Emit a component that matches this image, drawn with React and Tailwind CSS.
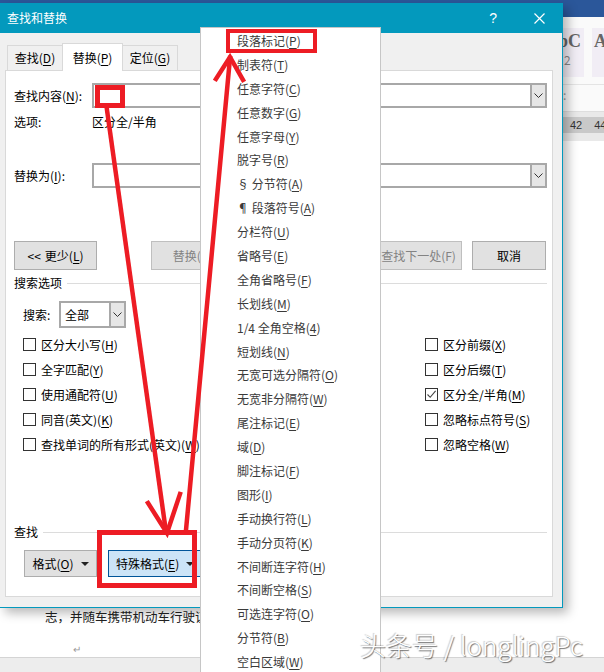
import React from "react";

function L({ t }) {
  const i = t.indexOf("&");
  if (i < 0) return t;
  return (
    <>
      {t.slice(0, i)}
      <u className="underline-offset-2">{t[i + 1]}</u>
      {t.slice(i + 2)}
    </>
  );
}

const MENU = [
  "段落标记(&P)",
  "制表符(&T)",
  "任意字符(&C)",
  "任意数字(&G)",
  "任意字母(&Y)",
  "脱字号(&R)",
  "§ 分节符(&A)",
  "¶ 段落符号(&A)",
  "分栏符(&U)",
  "省略号(&E)",
  "全角省略号(&F)",
  "长划线(&M)",
  "1/4 全角空格(&4)",
  "短划线(&N)",
  "无宽可选分隔符(&O)",
  "无宽非分隔符(&W)",
  "尾注标记(&E)",
  "域(&D)",
  "脚注标记(&F)",
  "图形(&I)",
  "手动换行符(&L)",
  "手动分页符(&K)",
  "不间断连字符(&H)",
  "不间断空格(&S)",
  "可选连字符(&O)",
  "分节符(&B)",
  "空白区域(&W)",
];

const LEFT_OPTS = [
  ["区分大小写(&H)", false],
  ["全字匹配(&Y)", false],
  ["使用通配符(&U)", false],
  ["同音(英文)(&K)", false],
  ["查找单词的所有形式(英文)(&W)", false],
];

const RIGHT_OPTS = [
  ["区分前缀(&X)", false],
  ["区分后缀(&T)", false],
  ["区分全/半角(&M)", true],
  ["忽略标点符号(&S)", false],
  ["忽略空格(&W)", false],
];

function Chevron() {
  return (
    <svg width="9" height="5" viewBox="0 0 9 5">
      <path d="M0.5 0.5 L4.5 4.5 L8.5 0.5" stroke="#333" fill="none" />
    </svg>
  );
}

function Caret() {
  return (
    <svg width="8" height="4" viewBox="0 0 8 4">
      <path d="M0 0 H8 L4 4 Z" fill="#222" />
    </svg>
  );
}

function Combo() {
  return (
    <div className="w-[455px] h-[25px] border-2 border-[#a8a8a8] bg-white flex">
      <div className="flex-1" />
      <div className="w-[15px] bg-[#e6e6e6] border-l-2 border-[#a8a8a8] flex items-center justify-center">
        <Chevron />
      </div>
    </div>
  );
}

function Check({ label, on }) {
  return (
    <div className="h-[25px] flex items-center gap-[5px]">
      <div className="w-[13px] h-[13px] border border-[#333] bg-white flex items-center justify-center">
        {on && (
          <svg width="11" height="11" viewBox="0 0 11 11">
            <path d="M1.5 5.5 L4.2 8.3 L9.6 1.8" stroke="#444" strokeWidth="1.1" fill="none" />
          </svg>
        )}
      </div>
      <span className="leading-[16px]">
        <L t={label} />
      </span>
    </div>
  );
}

function Btn({ w, children, disabled, className = "" }) {
  return (
    <div
      className={`h-full ${w} border border-[#adadad] bg-[#e1e1e1] flex items-center justify-center ${
        disabled ? "text-[#838383] border-[#bfbfbf]" : "text-black"
      } ${className}`}
    >
      {children}
    </div>
  );
}

export default function App() {
  return (
    <div className="relative w-[604px] h-[672px] overflow-hidden bg-white text-[12px] text-black font-['Noto_Sans_CJK_SC','Noto_Sans',sans-serif]">
      {/* word window behind */}
      <div className="flex flex-col h-full">
        <div className="h-[17px] shrink-0 bg-[#2b579a]" />
        <div className="h-[95px] shrink-0 bg-[#fafafa] flex flex-col">
          <div className="mt-[11px] h-[49px] flex gap-[8px] pl-[563px]">
            <div className="w-[21px] h-full bg-[#f1edf5] flex flex-col pt-[3px] overflow-hidden">
              <span className="font-['Liberation_Serif',serif] font-bold text-[18px] leading-[20px] text-[#666] -ml-[5px]">bC</span>
              <span className="text-[12px] leading-[18px] text-[#888] pl-[1px]">2</span>
            </div>
            <div className="w-[12px] h-full bg-[#f1edf5] pt-[3px] overflow-hidden">
              <span className="font-['Liberation_Serif',serif] font-bold text-[18px] leading-[20px] text-[#666] pl-[2px]">A</span>
            </div>
          </div>
          <div className="mt-[7px] h-px bg-[#e4e4e4]" />
          <div className="flex-1 border-b border-[#dedede] pl-[563px] text-[#999] leading-[20px]">:</div>
        </div>
        <div className="h-[29px] shrink-0 bg-[#e9e9e9] flex flex-col">
          <div className="mt-[5px] h-[16px] bg-[#c9c9c9] flex items-center gap-[12px] pl-[570px] text-[11px] text-[#333] font-['Liberation_Sans',sans-serif]">
            <span>42</span>
            <span>44</span>
          </div>
        </div>
        <div className="flex-1 bg-white overflow-hidden">
          <div className="pt-[467px] pl-[45px] text-[12.5px] leading-[17px] text-[#222] whitespace-nowrap">
            志，并随车携带机动车行驶证
          </div>
          <div className="pl-[73px] mt-[18px] text-[10px] leading-[12px] text-[#999]">↵</div>
        </div>
        <div className="h-[15px] shrink-0 bg-[#ededed] border-t border-[#d4d4d4]" />
      </div>

      {/* dialog */}
      <div className="absolute left-0 top-[3px] w-[563px] h-[605px] bg-[#f0f0f0] border-r border-b border-[#0399bd] shadow-[5px_5px_10px_rgba(0,0,0,0.28)] flex flex-col">
        <div className="h-[30px] shrink-0 bg-[#0399bd] text-white flex items-center pl-[7px]">
          <span className="text-[12px] leading-[16px]">查找和替换</span>
          <span className="ml-auto text-[14px] leading-[16px] font-['Liberation_Sans',sans-serif]">?</span>
          <svg className="ml-[37px] mr-[17px]" width="11" height="11" viewBox="0 0 11 11">
            <path d="M0.5 0.5 L10.5 10.5 M10.5 0.5 L0.5 10.5" stroke="white" strokeWidth="1.2" />
          </svg>
        </div>

        <div className="mt-[10px] h-[27px] pl-[7px] flex items-end">
          <div className="w-[55px] h-[25px] border-l border-t border-[#d9d9d9] flex items-center justify-center">
            <L t="查找(&D)" />
          </div>
          <div className="relative z-10 -mb-px w-[61px] h-[28px] bg-white border-l border-r border-t border-[#d9d9d9] flex items-center justify-center">
            <L t="替换(&P)" />
          </div>
          <div className="w-[55px] h-[25px] border-t border-r border-[#d9d9d9] flex items-center justify-center">
            <L t="定位(&G)" />
          </div>
        </div>

        <div className="ml-[5px] mr-[9px] h-[527px] bg-white border border-[#d9d9d9] flex flex-col pl-[8px] pr-[5px]">
          <div className="mt-[12px] h-[25px] flex items-center">
            <span className="w-[78px]">
              <L t="查找内容(&N):" />
            </span>
            <Combo />
          </div>
          <div className="mt-[6px] h-[16px] flex items-center leading-[16px]">
            <span className="w-[78px]">选项:</span>
            <span>区分全/半角</span>
          </div>
          <div className="mt-[33px] h-[25px] flex items-center">
            <span className="w-[78px]">
              <L t="替换为(&I):" />
            </span>
            <Combo />
          </div>

          <div className="mt-[53px] h-[29px] flex">
            <Btn w="w-[83px]">
              {"<< "}
              <span className="ml-[4px]">
                <L t="更少(&L)" />
              </span>
            </Btn>
            <Btn w="w-[83px]" disabled className="ml-[54px]">
              <L t="替换(&R)" />
            </Btn>
            {/* 全部替换 button sits under the open menu */}
            <Btn w="w-[83px]" disabled className="ml-[9px]" />
            <Btn w="w-[87px]" disabled className="ml-[49px]">
              查找下一处(F)
            </Btn>
            <Btn w="w-[74px]" className="ml-[10px]">
              取消
            </Btn>
          </div>

          <div className="mt-[5px] h-[16px] flex items-center leading-[16px]">
            <span>搜索选项</span>
            <div className="ml-[5px] flex-1 h-px bg-[#dcdcdc]" />
          </div>

          <div className="mt-[10px] h-[27px] pl-[9px] flex items-center">
            <span className="w-[36px]">搜索:</span>
            <div className="w-[67px] h-full border-2 border-[#a8a8a8] bg-white flex">
              <span className="flex-1 pl-[4px] leading-[23px]">全部</span>
              <div className="w-[15px] bg-[#e6e6e6] border-l-2 border-[#a8a8a8] flex items-center justify-center">
                <Chevron />
              </div>
            </div>
          </div>

          <div className="mt-[4px] pl-[9px] grid grid-cols-[402px_1fr]">
            <div className="flex flex-col">
              {LEFT_OPTS.map(([t, on]) => (
                <Check key={t} label={t} on={on} />
              ))}
            </div>
            <div className="flex flex-col">
              {RIGHT_OPTS.map(([t, on]) => (
                <Check key={t} label={t} on={on} />
              ))}
            </div>
          </div>

          <div className="mt-[67px] h-[16px] flex items-center leading-[16px]">
            <span>查找</span>
            <div className="ml-[5px] flex-1 h-px bg-[#dcdcdc]" />
          </div>

          <div className="mt-[10px] h-[27px] pl-[10px] flex">
            <Btn w="w-[73px]" className="gap-[7px]">
              <span>
                <L t="格式(&O)" />
              </span>
              <Caret />
            </Btn>
            <div className="ml-[11px] w-[110px] h-full bg-[#cce4f7] border border-[#005499] flex items-center gap-[7px] pl-[7px]">
              <span>
                <L t="特殊格式(&E)" />
              </span>
              <Caret />
            </div>
          </div>
        </div>
      </div>

      {/* special format menu */}
      <div className="absolute left-[200px] top-[27px] w-[181px] h-[660px] bg-white border border-[#c6c6c6] pt-[1px] text-[#3a3a3a]">
        {MENU.map((t, i) => (
          <div key={i} className="h-[23.9px] leading-[24px] pl-[36px] whitespace-nowrap">
            <L t={t} />
          </div>
        ))}
      </div>

      {/* red annotations */}
      <div className="absolute left-[95px] top-[85px] w-[30px] h-[23px] border-[5px] border-[#ed1c24]" />
      <div className="absolute left-[226px] top-[29px] w-[91px] h-[24px] border-[4px] border-[#ed1c24]" />
      <div className="absolute left-[97px] top-[530px] w-[100px] h-[58px] border-[5px] border-[#ed1c24]" />
      <svg className="absolute left-0 top-0 pointer-events-none" width="604" height="672" viewBox="0 0 604 672">
        <g stroke="#ed1c24" strokeWidth="4.5" fill="none" strokeLinecap="square">
          <path d="M107 110 L166 532" />
          <path d="M148 503 L167 533 L180 494" />
          <path d="M186 530 L230 58" />
          <path d="M216 79 L230 57 L243 80" />
        </g>
      </svg>

      {/* watermark */}
      <div className="absolute left-[360px] top-[628px] text-[26px] leading-[34px] font-light text-white whitespace-nowrap [text-shadow:1px_1px_1px_rgba(0,0,0,0.55),-1px_-1px_1px_rgba(0,0,0,0.2)]">
        头条号 / longlingPc
      </div>
    </div>
  );
}
